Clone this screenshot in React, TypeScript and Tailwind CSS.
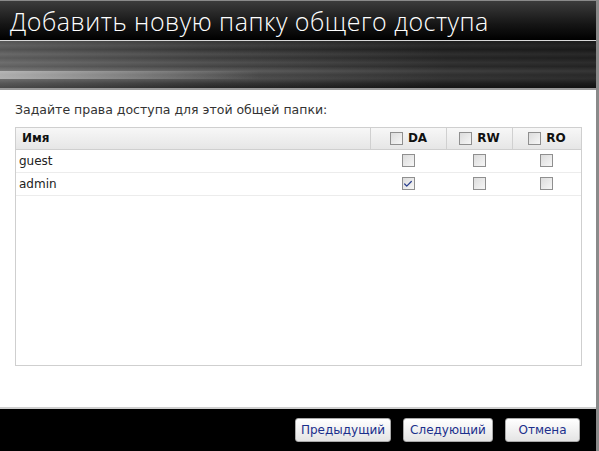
import { Check } from "lucide-react";

type userRow = {
  name: string;
  da: boolean;
  rw: boolean;
  ro: boolean;
};

const users: userRow[] = [
  { name: "guest", da: false, rw: false, ro: false },
  { name: "admin", da: true, rw: false, ro: false },
];

const Box = ({ checked }: { checked?: boolean }) => (
  <span className="inline-flex h-[13px] w-[13px] items-center justify-center border border-[#8f8f8f] bg-[linear-gradient(135deg,#dcdcdc,#f6f6f6)]">
    {checked && <Check size={10} strokeWidth={3} className="text-[#2a3f8f]" />}
  </span>
);

const HeadCell = ({ label, width }: { label: string; width: string }) => (
  <div
    className={`${width} flex items-center justify-center gap-[5px] border-l border-[#d0d0d0]`}
  >
    <Box />
    <span className="font-bold text-[#111]">{label}</span>
  </div>
);

const FooterButton = ({ label, width }: { label: string; width: string }) => (
  <button
    className={`${width} h-[24px] rounded-[3px] border border-[#a9a9a9] bg-[linear-gradient(#ffffff,#e4e4e4)] text-[12px] text-[#1b2f8c]`}
  >
    {label}
  </button>
);

const App = () => {
  return (
    <div className="h-[451px] w-[599px] overflow-hidden bg-black font-['DejaVu_Sans',Verdana,sans-serif]">
      <div className="flex h-full flex-col border-r-[3px] border-t border-[#8a8a8a] bg-white">
        {/* title bar */}
        <div className="h-[39px] bg-[linear-gradient(#3c3c3c,#151515_60%,#000)] pl-[10px] pt-[5px]">
          <h1 className="font-['Open_Sans',sans-serif] text-[25px] font-light leading-[31px] tracking-[0.5px] text-white">
            Добавить новую папку общего доступа
          </h1>
        </div>
        <div className="h-px bg-[#d8d8d8]" />
        {/* streaked banner */}
        <div className="relative h-[47px] bg-[linear-gradient(#2b2b2b_0%,#3a3a3a_10%,#2a2a2a_18%,#444_28%,#333_36%,#4a4a4a_46%,#3a3a3a_54%,#5a5a5a_64%,#444_72%,#4c4c4c_80%,#2e2e2e_90%,#1c1c1c_100%)]">
          <div className="absolute inset-0 bg-[linear-gradient(90deg,rgba(255,255,255,0.2),rgba(255,255,255,0.05)_35%,rgba(0,0,0,0.3)_75%,rgba(0,0,0,0.4))]" />
          <div className="absolute left-0 top-[30px] h-[8px] w-[260px] bg-[linear-gradient(90deg,rgba(255,255,255,0.45),rgba(255,255,255,0))]" />
        </div>
        <div className="h-[2px] bg-[#9a9a9a]" />

        {/* content */}
        <div className="flex flex-1 flex-col px-[15px] pt-[11px] text-[12px] text-[#222]">
          <p className="mb-[7px] text-[12.5px] text-[#333]">
            Задайте права доступа для этой общей папки:
          </p>
          <div className="h-[239px] w-[567px] border border-[#cfcfcf]">
            <div className="flex h-[22px] border-b border-[#cfcfcf] bg-[linear-gradient(#f7f7f7,#e6e6e6)]">
              <div className="flex flex-1 items-center pl-[6px] font-bold text-[#111]">
                Имя
              </div>
              <HeadCell label="DA" width="w-[76px]" />
              <HeadCell label="RW" width="w-[66px]" />
              <HeadCell label="RO" width="w-[69px]" />
            </div>
            {users.map((u) => (
              <div
                key={u.name}
                className="flex h-[23px] border-b border-[#ececec]"
              >
                <div className="flex flex-1 items-center pl-[3px]">{u.name}</div>
                <div className="flex w-[76px] items-center justify-center">
                  <Box checked={u.da} />
                </div>
                <div className="flex w-[66px] items-center justify-center">
                  <Box checked={u.rw} />
                </div>
                <div className="flex w-[69px] items-center justify-center">
                  <Box checked={u.ro} />
                </div>
              </div>
            ))}
          </div>
        </div>

        {/* footer */}
        <div className="h-[2px] bg-[#cfcfcf]" />
        <div className="flex h-[42px] items-center justify-end gap-[12px] bg-black pr-[16px]">
          <FooterButton label="Предыдущий" width="w-[96px]" />
          <FooterButton label="Следующий" width="w-[90px]" />
          <FooterButton label="Отмена" width="w-[75px]" />
        </div>
      </div>
    </div>
  );
};

export default App;
